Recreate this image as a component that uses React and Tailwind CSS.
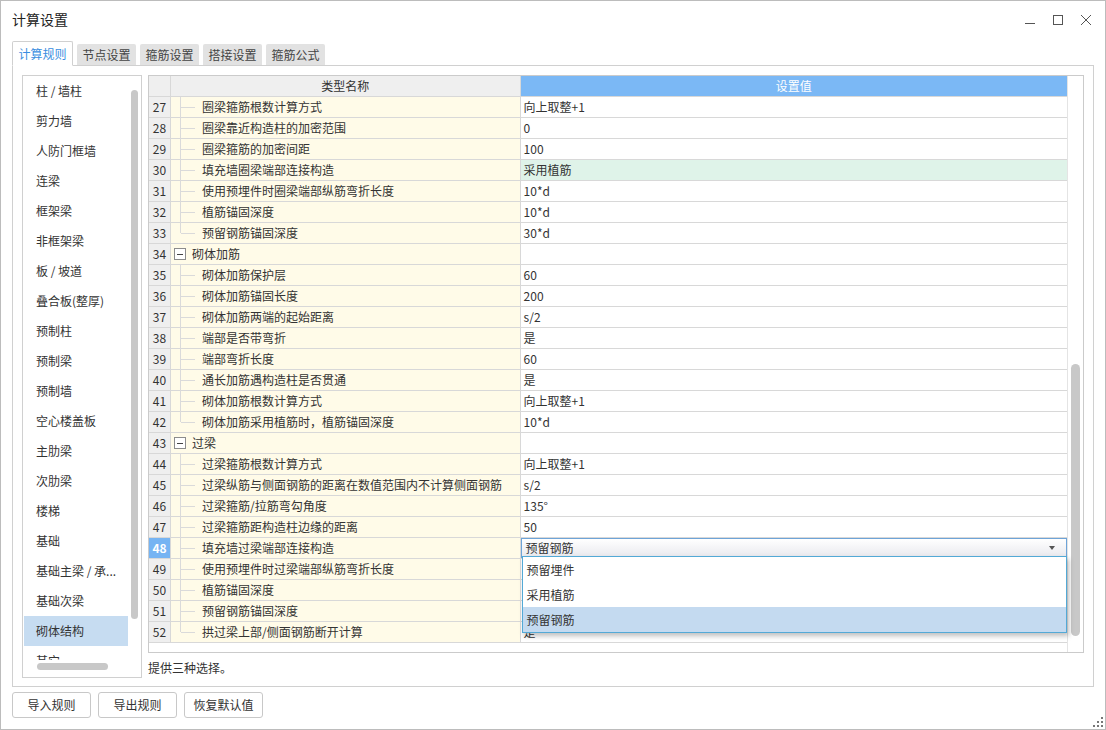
import React from "react";

const font = "font-['Noto_Sans_CJK_SC','Noto_Sans',sans-serif]";

const sideItems = [
  "柱 / 墙柱",
  "剪力墙",
  "人防门框墙",
  "连梁",
  "框架梁",
  "非框架梁",
  "板 / 坡道",
  "叠合板(整厚)",
  "预制柱",
  "预制梁",
  "预制墙",
  "空心楼盖板",
  "主肋梁",
  "次肋梁",
  "楼梯",
  "基础",
  "基础主梁 / 承...",
  "基础次梁",
  "砌体结构",
  "其它",
];

const rows = [
  { n: 27, name: "圈梁箍筋根数计算方式", value: "向上取整+1" },
  { n: 28, name: "圈梁靠近构造柱的加密范围", value: "0" },
  { n: 29, name: "圈梁箍筋的加密间距", value: "100" },
  { n: 30, name: "填充墙圈梁端部连接构造", value: "采用植筋", green: true },
  { n: 31, name: "使用预埋件时圈梁端部纵筋弯折长度", value: "10*d" },
  { n: 32, name: "植筋锚固深度", value: "10*d" },
  { n: 33, name: "预留钢筋锚固深度", value: "30*d", last: true },
  { n: 34, name: "砌体加筋", value: "", group: true },
  { n: 35, name: "砌体加筋保护层", value: "60" },
  { n: 36, name: "砌体加筋锚固长度", value: "200" },
  { n: 37, name: "砌体加筋两端的起始距离", value: "s/2" },
  { n: 38, name: "端部是否带弯折", value: "是" },
  { n: 39, name: "端部弯折长度", value: "60" },
  { n: 40, name: "通长加筋遇构造柱是否贯通", value: "是" },
  { n: 41, name: "砌体加筋根数计算方式", value: "向上取整+1" },
  { n: 42, name: "砌体加筋采用植筋时，植筋锚固深度", value: "10*d", last: true },
  { n: 43, name: "过梁", value: "", group: true },
  { n: 44, name: "过梁箍筋根数计算方式", value: "向上取整+1" },
  { n: 45, name: "过梁纵筋与侧面钢筋的距离在数值范围内不计算侧面钢筋", value: "s/2" },
  { n: 46, name: "过梁箍筋/拉筋弯勾角度", value: "135°" },
  { n: 47, name: "过梁箍筋距构造柱边缘的距离", value: "50" },
  { n: 48, name: "填充墙过梁端部连接构造", value: "预留钢筋", editor: true },
  // values of 49-51 sit under the open dropdown
  { n: 49, name: "使用预埋件时过梁端部纵筋弯折长度", value: "" },
  { n: 50, name: "植筋锚固深度", value: "" },
  { n: 51, name: "预留钢筋锚固深度", value: "" },
  { n: 52, name: "拱过梁上部/侧面钢筋断开计算", value: "是", last: true },
];

const options = ["预留埋件", "采用植筋", "预留钢筋"];

const tabs = ["计算规则", "节点设置", "箍筋设置", "搭接设置", "箍筋公式"];

const NameCell = ({ row }) => (
  <div className="relative w-[350px] h-full bg-[#fffbe8] border-r border-[#d8d8d8] flex items-center">
    {row.group ? (
      <>
        <span className="ml-[3px] w-[12px] h-[12px] border border-[#8c8c8c] bg-white flex items-center justify-center">
          <span className="w-[6px] h-px bg-[#444]" />
        </span>
        <span className="ml-[6px]">{row.name}</span>
      </>
    ) : (
      <>
        <span
          className={`absolute left-[9px] top-0 w-px bg-[#dadada] ${
            row.last ? "h-1/2" : "h-[21px]"
          }`}
        />
        <span className="absolute left-[10px] top-1/2 w-[14px] h-px bg-[#dadada]" />
        <span className="ml-[31px] whitespace-nowrap">{row.name}</span>
      </>
    )}
  </div>
);

const ValueCell = ({ row }) => {
  if (row.editor) {
    return (
      <div className="relative w-[547px] h-full">
        <div className="h-full border border-[#6ea4d8] bg-linear-to-b from-white to-[#e9e9ee] flex items-center justify-between pl-[4px] pr-[11px]">
          <span>{row.value}</span>
          <span className="w-0 h-0 border-l-[3px] border-r-[3px] border-t-[4px] border-l-transparent border-r-transparent border-t-[#555]" />
        </div>
        {/* dropdown list */}
        <div className="absolute top-[18px] left-[1px] right-0 z-10 bg-white border border-[#53a9d6] shadow-[2px_3px_5px_rgba(0,0,0,0.25)]">
          {options.map((o) => (
            <div
              key={o}
              className={`h-[25px] flex items-center pl-[4px] ${
                o === row.value ? "bg-[#c4daf0]" : ""
              }`}
            >
              {o}
            </div>
          ))}
        </div>
      </div>
    );
  }
  return (
    <div
      className={`w-[547px] h-full flex items-center pl-[3px] ${
        row.green ? "bg-[#dff3e9]" : "bg-white"
      }`}
    >
      {row.value}
    </div>
  );
};

const App = () => {
  return (
    <div
      className={`w-[1106px] h-[730px] bg-white border border-[#bcbcbc] flex flex-col relative text-[12px] text-[#333] ${font}`}
    >
      {/* title bar */}
      <div className="h-[40px] flex items-center justify-between pl-[11px] pr-[13px]">
        <span className="text-[14px] text-[#222] -mt-[3px]">计算设置</span>
        <div className="flex items-center gap-[16px] -mt-[3px] text-[#555]">
          <svg width="12" height="12" viewBox="0 0 12 12">
            <path d="M1 9.5h10" stroke="#555" strokeWidth="1" />
          </svg>
          <svg width="12" height="12" viewBox="0 0 12 12">
            <rect x="1.5" y="1.5" width="9" height="9" fill="none" stroke="#555" strokeWidth="1" />
          </svg>
          <svg width="12" height="12" viewBox="0 0 12 12">
            <path d="M1 1l10 10M11 1L1 11" stroke="#555" strokeWidth="1" />
          </svg>
        </div>
      </div>

      {/* tabs */}
      <div className="h-[24px] flex items-end ml-[11px] gap-[4px] relative z-[1]">
        {tabs.map((t, i) =>
          i === 0 ? (
            <div
              key={t}
              className="h-[25px] -mb-px w-[61px] bg-white border border-[#d0d0d0] border-b-white rounded-t-[2px] flex items-center justify-center text-[#3a8ee0]"
            >
              {t}
            </div>
          ) : (
            <div
              key={t}
              className="h-[21px] w-[59px] bg-[#e2e2e2] rounded-t-[2px] flex items-center justify-center text-[#444]"
            >
              {t}
            </div>
          )
        )}
      </div>

      {/* panel */}
      <div className="mx-[11px] h-[622px] border border-[#d0d0d0] flex pt-[9px] pl-[9px]">
        {/* side list */}
        <div className="w-[120px] h-[603px] border border-[#d0d0d0] flex flex-col">
          <div className="h-[584px] flex overflow-hidden">
            <div className="ml-[1px] w-[104px] flex flex-col">
              {sideItems.map((s) => (
                <div
                  key={s}
                  className={`h-[30px] shrink-0 flex items-center pl-[12px] whitespace-nowrap ${
                    s === "砌体结构" ? "bg-[#c6dcf1]" : ""
                  }`}
                >
                  {s}
                </div>
              ))}
            </div>
            <div className="ml-[3px] pt-[14px]">
              <div className="w-[7px] h-[529px] rounded-full bg-[#c8c8c8]" />
            </div>
          </div>
          <div className="pt-[3px] pl-[14px]">
            <div className="w-[71px] h-[7px] rounded-full bg-[#c8c8c8]" />
          </div>
        </div>

        {/* right side */}
        <div className="ml-[6px] w-[936px] flex flex-col">
          <div className="h-[578px] border border-[#cbcbcb] flex">
            <div className="w-[919px] flex flex-col border-r border-[#e4e4e4]">
              {/* header */}
              <div className="h-[21px] flex border-b border-[#d8d8d8] shrink-0">
                <div className="w-[22px] bg-[#efefef] border-r border-[#d8d8d8]" />
                <div className="w-[350px] bg-[#efefef] border-r border-[#d8d8d8] flex items-center justify-center">
                  类型名称
                </div>
                <div className="w-[547px] bg-[#7bb8f5] text-white flex items-center justify-center">
                  设置值
                </div>
              </div>
              {rows.map((r) => (
                <div key={r.n} className="h-[21px] flex border-b border-[#d8d8d8] shrink-0">
                  <div
                    className={`w-[22px] h-full border-r border-[#d8d8d8] flex items-center justify-center ${
                      r.editor ? "bg-[#76b4f3] text-white font-bold" : "bg-[#efefef]"
                    }`}
                  >
                    {r.n}
                  </div>
                  <NameCell row={r} />
                  <ValueCell row={r} />
                </div>
              ))}
            </div>
            <div className="flex-1 pt-[288px] pl-[3px]">
              <div className="w-[9px] h-[272px] rounded-full bg-[#c8c8c8]" />
            </div>
          </div>
          <div className="mt-[6px] leading-[18px]">提供三种选择。</div>
        </div>
      </div>

      {/* buttons */}
      <div className="flex gap-[7px] ml-[11px] mt-[5px]">
        {["导入规则", "导出规则", "恢复默认值"].map((b) => (
          <div
            key={b}
            className="h-[26px] w-[79px] border border-[#c8c8c8] rounded-[3px] bg-white flex items-center justify-center"
          >
            {b}
          </div>
        ))}
      </div>

      {/* resize grip */}
      <svg className="absolute right-[2px] bottom-[2px]" width="10" height="10" viewBox="0 0 10 10">
        <rect x="8" y="0" width="2" height="2" fill="#777" />
        <rect x="4" y="4" width="2" height="2" fill="#777" />
        <rect x="8" y="4" width="2" height="2" fill="#777" />
        <rect x="0" y="8" width="2" height="2" fill="#777" />
        <rect x="4" y="8" width="2" height="2" fill="#777" />
        <rect x="8" y="8" width="2" height="2" fill="#777" />
      </svg>
    </div>
  );
};

export default App;
